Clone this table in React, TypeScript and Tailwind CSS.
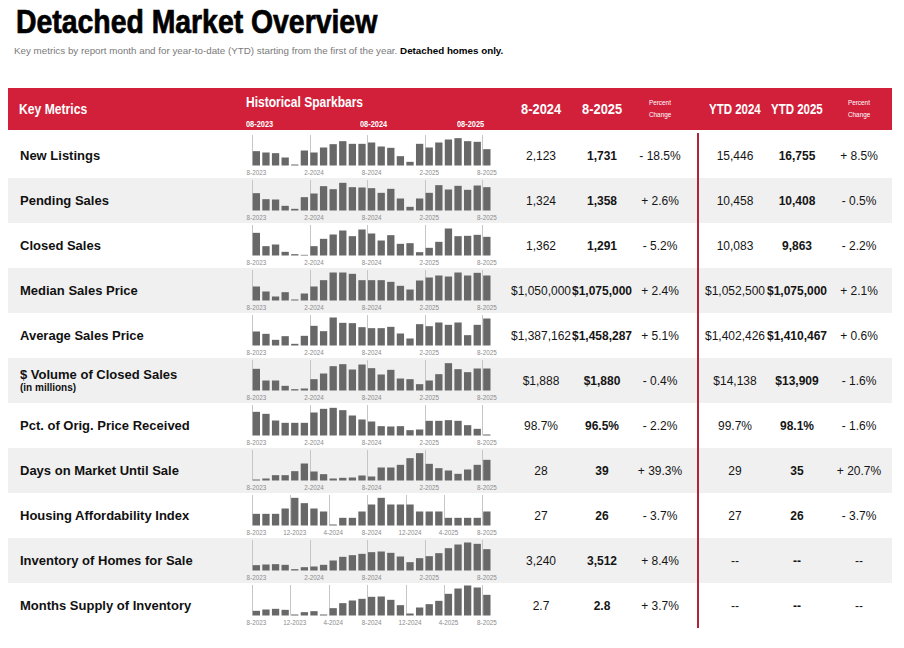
import React from "react";

const S = 9.604;
const SIX: [number, string][] = [[0, "8-2023"], [6, "2-2024"], [12, "8-2024"], [18, "2-2025"], [24, "8-2025"]];
const FOUR: [number, string][] = [[0, "8-2023"], [4, "12-2023"], [8, "4-2024"], [12, "8-2024"], [16, "12-2024"], [20, "4-2025"], [24, "8-2025"]];

type Row = {
  label: string;
  sub?: string;
  data: number[];
  ticks: [number, string][];
  v: string[];
};

const rows: Row[] = [
  { label: "New Listings", data: [43,39,37,24,3,45,39,54,64,73,65,65,69,57,53,28,11,65,54,69,78,82,73,71,49], ticks: SIX, v: ["2,123","1,731","- 18.5%","15,446","16,755","+ 8.5%"] },
  { label: "Pending Sales", data: [52,34,33,14,5,40,51,73,64,83,70,69,67,53,65,36,11,36,53,76,63,74,62,75,70], ticks: SIX, v: ["1,324","1,358","+ 2.6%","10,458","10,408","- 0.5%"] },
  { label: "Closed Sales", data: [68,28,33,11,4,2,28,50,63,75,58,78,66,45,61,35,37,10,23,41,81,58,59,62,56], ticks: SIX, v: ["1,362","1,291","- 5.2%","10,083","9,863","- 2.2%"] },
  { label: "Median Sales Price", data: [42,27,12,25,3,21,42,61,84,84,80,61,61,61,56,44,33,60,69,75,72,84,75,83,75], ticks: SIX, v: ["$1,050,000","$1,075,000","+ 2.4%","$1,052,500","$1,075,000","+ 2.1%"] },
  { label: "Average Sales Price", data: [42,35,17,28,5,29,59,43,84,68,67,55,52,52,56,36,21,64,58,69,62,69,31,62,81], ticks: SIX, v: ["$1,387,162","$1,458,287","+ 5.1%","$1,402,426","$1,410,467","+ 0.6%"] },
  { label: "$ Volume of Closed Sales", sub: "(in millions)", data: [65,30,30,14,4,6,34,51,73,79,63,78,67,48,62,36,34,19,30,49,82,64,55,66,66], ticks: SIX, v: ["$1,888","$1,880","- 0.4%","$14,138","$13,909","- 1.6%"] },
  { label: "Pct. of Orig. Price Received", data: [71,65,45,38,38,38,69,80,83,76,60,48,42,28,27,28,16,18,44,44,46,44,31,20,3], ticks: SIX, v: ["98.7%","96.5%","- 2.2%","99.7%","98.1%","- 1.6%"] },
  { label: "Days on Market Until Sale", data: [3,6,16,16,28,51,27,19,6,8,9,15,12,39,39,47,67,82,50,37,30,20,33,47,62], ticks: SIX, v: ["28","39","+ 39.3%","29","35","+ 20.7%"] },
  { label: "Housing Affordability Index", data: [35,35,35,51,83,67,51,42,3,23,23,42,63,83,63,63,63,42,42,42,23,23,23,23,42], ticks: FOUR, v: ["27","26","- 3.7%","27","26","- 3.7%"] },
  { label: "Inventory of Homes for Sale", data: [16,18,19,17,4,10,12,17,30,41,46,50,55,57,53,42,25,37,43,52,67,78,84,80,64], ticks: SIX, v: ["3,240","3,512","+ 8.4%","--","--","--"] },
  { label: "Months Supply of Inventory", data: [14,18,20,17,3,10,13,3,22,37,45,50,56,57,47,31,6,24,34,44,65,81,90,84,62], ticks: FOUR, v: ["2.7","2.8","+ 3.7%","--","--","--"] },
];

function Spark({ data, ticks }: { data: number[]; ticks: [number, string][] }) {
  return (
    <svg width={262} height={45} className="block">
      {ticks.map(([k]) => {
        const x = Math.round(6 + k * S) + 0.5;
        return <line key={"l" + k} x1={x} x2={x} y1={2} y2={32.5} stroke="#c6c6c6" strokeWidth={1} />;
      })}
      {data.map((v, i) => (
        <rect key={i} x={6.7 + i * S} y={32.5 - v / 3} width={7.3} height={v / 3} fill="#686868" />
      ))}
      {ticks.map(([k, t]) => (
        <text
          key={"t" + k}
          x={6.7 + k * S + 3.65}
          y={42}
          fontSize={6.3}
          textAnchor="middle"
          fill="#8c8c8c"
          fontFamily="'Liberation Sans', Arial, sans-serif"
        >
          {t}
        </text>
      ))}
    </svg>
  );
}

export default function App() {
  return (
    <div className="w-[904px] h-[648px] bg-white overflow-hidden font-['Liberation_Sans',Arial,sans-serif] text-[#151515]">
      <h1 className="pl-[16px] pt-[3px] text-[33px] leading-[38px] font-bold text-black whitespace-nowrap">
        <span className="inline-block origin-left scale-x-[0.86] [-webkit-text-stroke:0.7px_#000]">Detached Market Overview</span>
      </h1>
      <p className="pl-[14px] mt-[4px] text-[9.8px] leading-[12px] text-[#7a7a7a] whitespace-nowrap">
        Key metrics by report month and for year-to-date (YTD) starting from the first of the year.{" "}
        <span className="font-bold text-black">Detached homes only.</span>
      </p>

      <div className="ml-[8px] w-[884px] mt-[31px] h-[42px] bg-[#d2203b] text-white flex items-stretch font-bold">
        <div className="w-[238px] pl-[11px] flex items-center text-[15px]">
          <span className="inline-block origin-left scale-x-[0.81] whitespace-nowrap">Key Metrics</span>
        </div>
        <div className="w-[264px] flex flex-col pt-[6px]">
          <div className="text-[14.5px] leading-[17px] whitespace-nowrap">
            <span className="inline-block origin-left scale-x-[0.83]">Historical Sparkbars</span>
          </div>
          <div className="flex text-[9px] leading-[10px] mt-[8px] whitespace-nowrap">
            <div className="w-[114px]">
              <span className="inline-block origin-left scale-x-[0.82]">08-2023</span>
            </div>
            <div className="w-[97px]">
              <span className="inline-block origin-left scale-x-[0.82]">08-2024</span>
            </div>
            <div className="w-[40px]">
              <span className="inline-block origin-left scale-x-[0.82]">08-2025</span>
            </div>
          </div>
        </div>
        <div className="w-[62px] flex items-center justify-center text-[15.5px] whitespace-nowrap">
          <span className="inline-block scale-x-[0.83]">8-2024</span>
        </div>
        <div className="w-[60px] flex items-center justify-center text-[15.5px] whitespace-nowrap">
          <span className="inline-block scale-x-[0.83]">8-2025</span>
        </div>
        <div className="w-[56px] flex flex-col items-center justify-center text-[7.5px] leading-[12px] font-normal">
          <span className="inline-block scale-x-[0.85]">Percent</span>
          <span className="inline-block scale-x-[0.85]">Change</span>
        </div>
        <div className="w-[16px]" />
        <div className="w-[62px] flex items-center justify-center text-[15.5px] whitespace-nowrap">
          <span className="inline-block scale-x-[0.74]">YTD 2024</span>
        </div>
        <div className="w-[62px] flex items-center justify-center text-[15.5px] whitespace-nowrap">
          <span className="inline-block scale-x-[0.74]">YTD 2025</span>
        </div>
        <div className="w-[62px] flex flex-col items-center justify-center text-[7.5px] leading-[12px] font-normal">
          <span className="inline-block scale-x-[0.85]">Percent</span>
          <span className="inline-block scale-x-[0.85]">Change</span>
        </div>
      </div>

      <div className="ml-[8px] w-[884px] mt-[3px] flex flex-col">
        {rows.map((r, idx) => (
          <div key={r.label} className={`h-[45px] flex items-stretch ${idx % 2 === 1 ? "bg-[#f0f0f0]" : "bg-white"}`}>
            <div className="w-[238px] pl-[12px] flex flex-col justify-center">
              <div className="text-[13px] leading-[15px] font-bold text-[#111]">{r.label}</div>
              {r.sub && <div className="text-[10px] leading-[12px] font-bold text-[#111]">{r.sub}</div>}
            </div>
            <div className="w-[264px]">
              <Spark data={r.data} ticks={r.ticks} />
            </div>
            <div className="w-[62px] flex items-center justify-center text-[12px] whitespace-nowrap">{r.v[0]}</div>
            <div className="w-[60px] flex items-center justify-center text-[12px] font-bold whitespace-nowrap">{r.v[1]}</div>
            <div className="w-[56px] flex items-center justify-center text-[12px] whitespace-nowrap">{r.v[2]}</div>
            <div className="w-[9px]" />
            <div className="w-[2px] bg-[#b3243a]" />
            <div className="w-[5px]" />
            <div className="w-[62px] flex items-center justify-center text-[12px] whitespace-nowrap">{r.v[3]}</div>
            <div className="w-[62px] flex items-center justify-center text-[12px] font-bold whitespace-nowrap">{r.v[4]}</div>
            <div className="w-[62px] flex items-center justify-center text-[12px] whitespace-nowrap">{r.v[5]}</div>
          </div>
        ))}
      </div>
    </div>
  );
}
